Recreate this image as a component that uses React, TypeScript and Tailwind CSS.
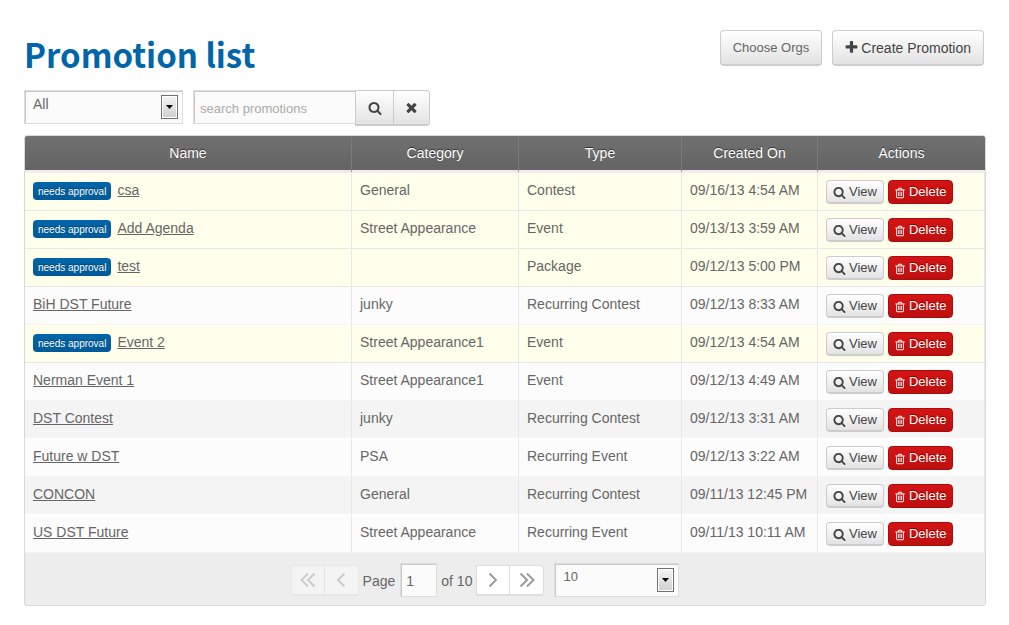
import { useState } from "react";
import type { ReactNode } from "react";

type Promotion = {
  name: string;
  category: string;
  type: string;
  created: string;
  pending?: boolean;
};

const promotions: Promotion[] = [
  { name: "csa", category: "General", type: "Contest", created: "09/16/13 4:54 AM", pending: true },
  { name: "Add Agenda", category: "Street Appearance", type: "Event", created: "09/13/13 3:59 AM", pending: true },
  { name: "test", category: "", type: "Package", created: "09/12/13 5:00 PM", pending: true },
  { name: "BiH DST Future", category: "junky", type: "Recurring Contest", created: "09/12/13 8:33 AM" },
  { name: "Event 2", category: "Street Appearance1", type: "Event", created: "09/12/13 4:54 AM", pending: true },
  { name: "Nerman Event 1", category: "Street Appearance1", type: "Event", created: "09/12/13 4:49 AM" },
  { name: "DST Contest", category: "junky", type: "Recurring Contest", created: "09/12/13 3:31 AM" },
  { name: "Future w DST", category: "PSA", type: "Recurring Event", created: "09/12/13 3:22 AM" },
  { name: "CONCON", category: "General", type: "Recurring Contest", created: "09/11/13 12:45 PM" },
  { name: "US DST Future", category: "Street Appearance", type: "Recurring Event", created: "09/11/13 10:11 AM" },
];

const icons = {
  search:
    "M1216 832q0-185-131.5-316.5t-316.5-131.5-316.5 131.5-131.5 316.5 131.5 316.5 316.5 131.5 316.5-131.5 131.5-316.5zm512 832q0 52-38 90t-90 38q-54 0-90-38l-343-342q-179 124-399 124-143 0-273.5-55.5t-225-150-150-225-55.5-273.5 55.5-273.5 150-225 225-150 273.5-55.5 273.5 55.5 225 150 150 225 55.5 273.5q0 220-124 399l343 343q37 37 37 90z",
  times:
    "M1490 1322q0 40-28 68l-136 136q-28 28-68 28t-68-28l-294-294-294 294q-28 28-68 28t-68-28l-136-136q-28-28-28-68t28-68l294-294-294-294q-28-28-28-68t28-68l136-136q28-28 68-28t68 28l294 294 294-294q28-28 68-28t68 28l136 136q28 28 28 68t-28 68l-294 294 294 294q28 28 28 68z",
  plus:
    "M1600 736v192q0 40-28 68t-68 28h-416v416q0 40-28 68t-68 28h-192q-40 0-68-28t-28-68v-416h-416q-40 0-68-28t-28-68v-192q0-40 28-68t68-28h416v-416q0-40 28-68t68-28h192q40 0 68 28t28 68v416h416q40 0 68 28t28 68z",
  trash:
    "M704 736v576q0 14-9 23t-23 9h-64q-14 0-23-9t-9-23v-576q0-14 9-23t23-9h64q14 0 23 9t9 23zm256 0v576q0 14-9 23t-23 9h-64q-14 0-23-9t-9-23v-576q0-14 9-23t23-9h64q14 0 23 9t9 23zm256 0v576q0 14-9 23t-23 9h-64q-14 0-23-9t-9-23v-576q0-14 9-23t23-9h64q14 0 23 9t9 23zm128 724v-948h-896v948q0 22 7 40.5t14.5 27 10.5 8.5h832q3 0 10.5-8.5t14.5-27 7-40.5zm-672-1076h448l-48-117q-7-9-17-11h-317q-10 2-17 11zm928 32v64q0 14-9 23t-23 9h-96v948q0 83-47 143.5t-113 60.5h-832q-66 0-113-58.5t-47-141.5v-952h-96q-14 0-23-9t-9-23v-64q0-14 9-23t23-9h309l70-167q15-37 54-63t79-26h320q40 0 79 26t54 63l70 167h309q14 0 23 9t9 23z",
};

function Icon({ name, className }: { name: keyof typeof icons; className: string }) {
  return (
    <svg viewBox="0 0 1792 1792" className={className} fill="currentColor" aria-hidden="true">
      <path d={icons[name]} />
    </svg>
  );
}

function Chevron({ double, flip }: { double?: boolean; flip?: boolean }) {
  return (
    <svg
      viewBox="0 0 16 16"
      className={flip ? "size-4 rotate-180" : "size-4"}
      fill="none"
      stroke="currentColor"
      strokeWidth="1.9"
      aria-hidden="true"
    >
      <path d={double ? "M1.5 1.5L8 8l-6.500 6.500M8 1.500L14.500 8 8 14.500" : "M4.500 1.500L11 8l-6.500 6.500"} />
    </svg>
  );
}

const fieldBox = "h-[34px] border border-[#ddd] bg-[#fbfbfb] shadow-[inset_1px_1px_0_#c8c8c8]";

function SelectBox({
  label,
  options,
  className,
}: {
  label: string;
  options: string[];
  className: string;
}) {
  return (
    <div className="relative">
      <select
        aria-label={label}
        className={`appearance-none pb-1.5 pl-2 text-[#666] ${fieldBox} ${className}`}
      >
        {options.map((option) => (
          <option key={option}>{option}</option>
        ))}
      </select>
      <span className="pointer-events-none absolute top-[5px] right-[5px] flex h-6 w-[17px] items-center justify-center border border-[#707070] bg-linear-to-b from-[#f4f4f4] to-[#cfcfcf] shadow-[inset_0_0_0_1px_#fff]">
        <svg viewBox="0 0 7 4" className="h-1 w-[7px]" aria-hidden="true">
          <path d="M0 0h7L3.500 4z" fill="#000" />
        </svg>
      </span>
    </div>
  );
}

const greyButton =
  "border border-[#ccc] border-b-2 bg-linear-to-b from-white to-[#e3e3e3] text-[#444] whitespace-nowrap";

function PageButton({
  label,
  className,
  children,
  disabled,
}: {
  label: string;
  className: string;
  children: ReactNode;
  disabled?: boolean;
}) {
  return (
    <button
      type="button"
      aria-label={label}
      disabled={disabled}
      className={`flex h-[31px] w-[34px] items-center justify-center border border-b-2 ${disabled ? "border-[#e6e6e6] bg-[#f4f4f4] text-[#ccc]" : "border-[#ddd] bg-white text-[#999]"} ${className}`}
    >
      {children}
    </button>
  );
}

export default function App() {
  const [query, setQuery] = useState("");
  const [page, setPage] = useState("1");

  return (
    <main className="bg-white pt-[30px] pr-[23px] pb-5 pl-6 font-['Liberation_Sans',Arial,sans-serif] text-sm text-[#666]">
      <header className="flex items-start justify-between pr-0.5">
        <h1 className="pt-1 pb-1 font-['Noto_Sans_CJK_SC',sans-serif] text-[33px] leading-10 font-bold text-[#0066a9]">
          Promotion list
        </h1>
        <div className="flex gap-2.5">
          <button type="button" className={`h-9 rounded px-3 pt-0.5 text-[13px] ${greyButton}`}>
            <span className="text-[#666]">Choose Orgs</span>
          </button>
          <button type="button" className={`flex h-9 items-center gap-0.5 rounded pr-3 pl-[11px] text-sm ${greyButton}`}>
            <Icon name="plus" className="size-[15px]" />
            Create Promotion
          </button>
        </div>
      </header>

      <form className="mt-3 flex items-start gap-2.5" onSubmit={(e) => e.preventDefault()}>
        <SelectBox label="Filter promotions" options={["All", "Needs approval"]} className="w-[159px] text-sm" />
        <div className="flex items-start">
          <input
            aria-label="Search promotions"
            placeholder="search promotions"
            value={query}
            onChange={(e) => setQuery(e.target.value)}
            className={`w-[162px] border-r-0 pt-0.5 pl-1.5 text-[13px] placeholder:text-[#aaa] ${fieldBox}`}
          />
          <button type="submit" aria-label="Search" className={`flex h-9 w-[39px] items-center justify-center ${greyButton}`}>
            <Icon name="search" className="size-3.5" />
          </button>
          <button
            type="button"
            aria-label="Clear search"
            onClick={() => setQuery("")}
            className={`flex h-9 w-9 items-center justify-center rounded-r border-l-0 ${greyButton}`}
          >
            <Icon name="times" className="size-[15px]" />
          </button>
        </div>
      </form>

      <section className="mt-[9px] overflow-hidden rounded-[3px] border border-[#d9d9d9] bg-[#ededed]">
        <table className="w-full table-fixed border-separate border-spacing-0">
          <colgroup>
            <col />
            <col className="w-[167px]" />
            <col className="w-[163px]" />
            <col className="w-[136px]" />
            <col className="w-[167px]" />
          </colgroup>
          <thead>
            <tr>
              {["Name", "Category", "Type", "Created On", "Actions"].map((heading) => (
                <th
                  key={heading}
                  scope="col"
                  className="h-[37px] border-r border-b-3 border-r-[#7b7b7b] border-b-[#ededed] bg-linear-to-b from-[#707070] to-[#646464] p-0 font-normal text-white [text-shadow:0_-1px_0_#333] last:border-r-0"
                >
                  {heading}
                </th>
              ))}
            </tr>
          </thead>
          <tbody className="[&_td]:h-[38px] [&_td]:border-r [&_td]:border-b [&_td]:border-r-[#e7e7ea] [&_td]:px-2 [&_td]:pt-0 [&_td]:pb-1 [&_td]:align-middle [&_td]:whitespace-nowrap [&_td:last-child]:pb-0">
            {promotions.map((p, i) => (
              <tr
                key={p.name}
                className={
                  p.pending
                    ? "bg-[#ffffeb] [&_td]:border-b-[#e7e7ea]"
                    : i % 2
                      ? "bg-[#fcfcfc] [&_td]:border-b-[#f4f4f4]"
                      : "bg-[#f4f4f4] [&_td]:border-b-white"
                }
              >
                <td>
                  <div className="flex items-end gap-1.5">
                    {p.pending && (
                      <span className="h-[18px] rounded bg-linear-to-b from-[#0066a9] to-[#005a98] px-[5px] text-[10px] leading-5 text-white [text-shadow:0_-1px_0_#00406b]">
                        needs approval
                      </span>
                    )}
                    <a href="#promotion" className="leading-5 underline">
                      {p.name}
                    </a>
                  </div>
                </td>
                <td>{p.category}</td>
                <td>{p.type}</td>
                <td>{p.created}</td>
                <td>
                  <div className="flex gap-1">
                    <button
                      type="button"
                      className={`flex h-6 items-center gap-[3px] rounded px-1.5 pt-0.5 text-[13px] ${greyButton}`}
                    >
                      <Icon name="search" className="size-[13px]" />
                      View
                    </button>
                    <button
                      type="button"
                      className="flex h-6 items-center gap-[3px] rounded border border-[#a80c0c] bg-linear-to-b from-[#d51414] to-[#bd0f0f] px-[5px] pt-0.5 text-[13px] whitespace-nowrap text-white [text-shadow:0_-1px_0_#800]"
                    >
                      <Icon name="trash" className="size-3" />
                      Delete
                    </button>
                  </div>
                </td>
              </tr>
            ))}
          </tbody>
        </table>

        <nav aria-label="Pagination" className="flex items-center justify-center pt-2.5 pr-10 pb-2">
          <PageButton label="First page" className="rounded-l" disabled>
            <Chevron double flip />
          </PageButton>
          <PageButton label="Previous page" className="border-l-0" disabled>
            <Chevron flip />
          </PageButton>
          <label htmlFor="page" className="pt-0.5 pr-[5px] pl-1">
            Page
          </label>
          <input
            id="page"
            value={page}
            onChange={(e) => setPage(e.target.value)}
            className={`w-[37px] pt-0.5 pl-[5px] text-sm ${fieldBox}`}
          />
          <span className="px-1 pt-0.5">of 10</span>
          <PageButton label="Next page" className="">
            <Chevron />
          </PageButton>
          <PageButton label="Last page" className="mr-2.5 rounded-r border-l-0">
            <Chevron double />
          </PageButton>
          <SelectBox label="Rows per page" options={["10", "25", "50"]} className="w-[125px] text-[13px]" />
        </nav>
      </section>
    </main>
  );
}
